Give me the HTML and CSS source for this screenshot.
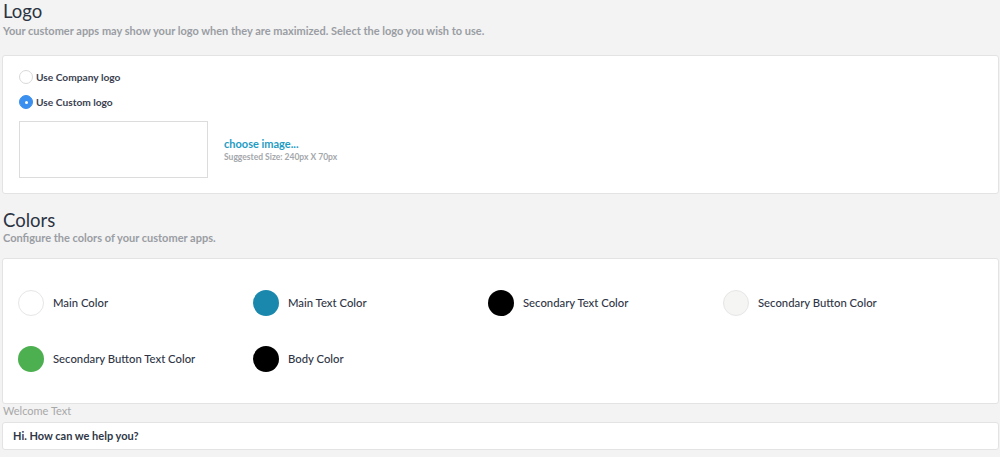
FILE: index.html
```html
<!DOCTYPE html>
<html>
<head>
<meta charset="utf-8">
<link rel="stylesheet" href="styles.css">
</head>
<body>
<section class="section">
  <h2 class="title">Logo</h2>
  <p class="subtitle">Your customer apps may show your logo when they are maximized. Select the logo you wish to use.</p>
  <div class="card logo-card">
    <label class="radio-row"><span class="radio"></span><span class="radio-label">Use Company logo</span></label>
    <label class="radio-row"><span class="radio checked"></span><span class="radio-label">Use Custom logo</span></label>
    <div class="logo-upload">
      <div class="logo-box"></div>
      <div class="logo-info">
        <a class="choose">choose image...</a>
        <span class="hint">Suggested Size: 240px X 70px</span>
      </div>
    </div>
  </div>
</section>
<section class="section">
  <h2 class="title colors-title">Colors</h2>
  <p class="subtitle colors-sub">Configure the colors of your customer apps.</p>
  <div class="card colors-card">
    <div class="swatch-item"><span class="swatch light"></span><span class="swatch-label">Main Color</span></div>
    <div class="swatch-item"><span class="swatch teal"></span><span class="swatch-label">Main Text Color</span></div>
    <div class="swatch-item"><span class="swatch black"></span><span class="swatch-label">Secondary Text Color</span></div>
    <div class="swatch-item"><span class="swatch offwhite"></span><span class="swatch-label">Secondary Button Color</span></div>
    <div class="swatch-item"><span class="swatch green"></span><span class="swatch-label">Secondary Button Text Color</span></div>
    <div class="swatch-item"><span class="swatch black"></span><span class="swatch-label">Body Color</span></div>
  </div>
</section>
<div class="field">
  <label class="field-label">Welcome Text</label>
  <div class="input">Hi. How can we help you?</div>
</div>
</body>
</html>
```

FILE: styles.css
```css
html, body {
  margin: 0;
  background: #f3f3f3;
}
body {
  padding: 0 1px 0 2px;
  font-family: Lato, "Open Sans", sans-serif;
  color: #343a4b;
  overflow: hidden;
}
.title {
  margin: 0 0 0 1px;
  font-size: 18.5px;
  font-weight: 400;
  line-height: 22px;
  color: #2c3444;
}
.colors-title {
  margin-top: 15px;
}
.subtitle {
  margin: 2px 0 0 1px;
  font-size: 11px;
  font-weight: 700;
  line-height: 14px;
  color: #9a9da3;
}
.colors-sub {
  margin-top: 0;
}
.card {
  background: #fff;
  border: 1px solid #e3e3e3;
  border-radius: 3px;
  margin-top: 17px;
}
.colors-sub + .card {
  margin-top: 13px;
}
.logo-card {
  padding: 14px 16px 15px 16px;
  display: flex;
  flex-direction: column;
}
.radio-row {
  display: flex;
  align-items: center;
  height: 14px;
  margin-bottom: 11px;
}
.radio {
  width: 12px;
  height: 12px;
  border-radius: 50%;
  border: 1px solid #d9d9d9;
  background: #fff;
  margin-right: 3px;
  box-sizing: content-box;
  position: relative;
}
.radio.checked {
  background: #3b8fef;
  border-color: #3b8fef;
}
.radio.checked::after {
  content: "";
  position: absolute;
  left: 4.5px;
  top: 4.5px;
  width: 3px;
  height: 3px;
  border-radius: 50%;
  background: #fff;
}
.radio-label {
  font-size: 10.2px;
  font-weight: 700;
  color: #3b4150;
}
.logo-upload {
  display: flex;
  align-items: center;
  margin-top: 1px;
}
.logo-box {
  width: 187px;
  height: 55px;
  border: 1px solid #dcdcdc;
}
.logo-info {
  display: flex;
  flex-direction: column;
  margin-left: 16px;
  margin-top: 1px;
}
.choose {
  font-size: 11px;
  font-weight: 700;
  color: #1e9cc4;
  line-height: 14px;
}
.hint {
  font-size: 8.5px;
  font-weight: 700;
  color: #a4a7ab;
  line-height: 12px;
}
.colors-card {
  display: grid;
  grid-template-columns: repeat(4, 235px);
  grid-auto-rows: 56px;
  padding: 15.5px 15px 16.5px 15px;
  align-items: center;
}
.swatch-item {
  display: flex;
  align-items: center;
}
.swatch {
  width: 26px;
  height: 26px;
  border-radius: 50%;
  margin-right: 9px;
  box-sizing: border-box;
}
.swatch.light { background: #fff; border: 1px solid #e6e6e6; }
.swatch.offwhite { background: #f5f5f3; border: 1px solid #e6e6e6; }
.swatch.teal { background: #1a88ad; }
.swatch.black { background: #000; }
.swatch.green { background: #4caf50; }
.swatch-label {
  font-size: 11.3px;
  font-weight: 500;
  color: #2f3545;
}
.field {
  display: flex;
  flex-direction: column;
}
.field-label {
  font-size: 11px;
  color: #a8a8a8;
  line-height: 14px;
  margin: 0 0 4px 1px;
}
.input {
  background: #fff;
  border: 1px solid #e3e3e3;
  border-radius: 3px;
  height: 26px;
  line-height: 26px;
  padding-left: 10px;
  font-size: 11px;
  font-weight: 700;
  color: #2f3747;
}
```
